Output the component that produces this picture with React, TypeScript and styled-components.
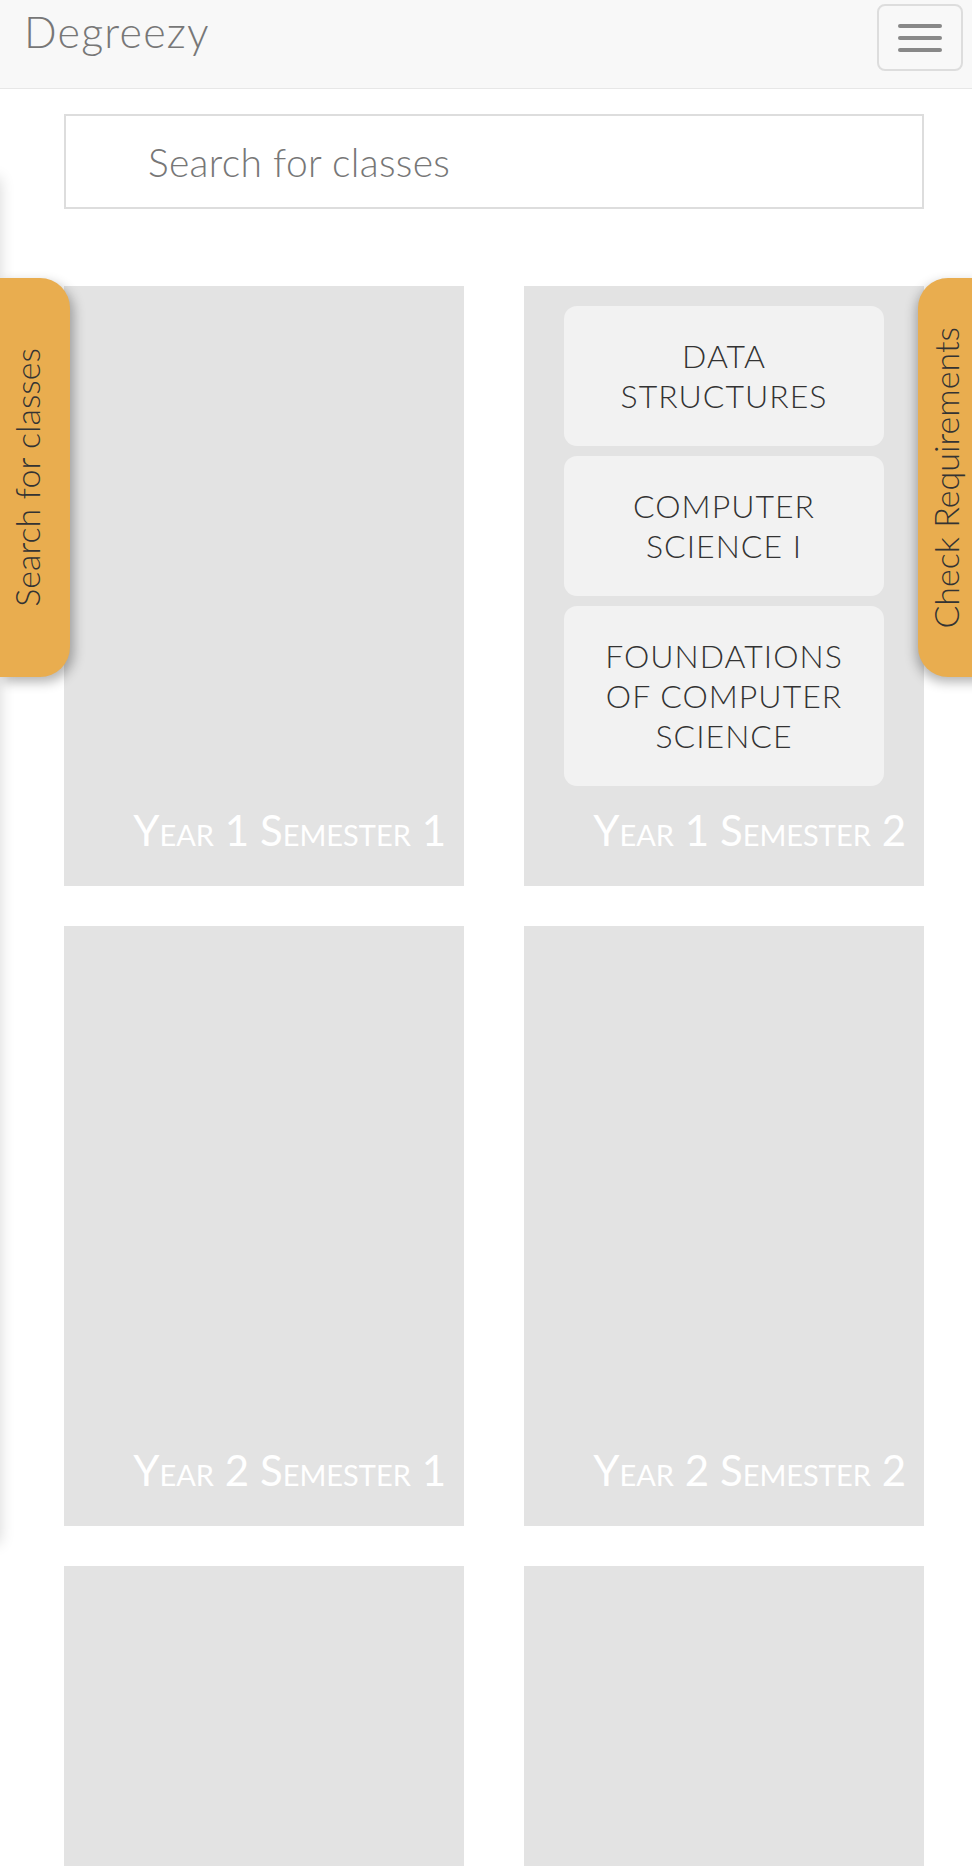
import React from 'react';
import styled, { createGlobalStyle } from 'styled-components';

const GlobalStyle = createGlobalStyle`
  body {
    margin: 0;
    background: #ffffff;
    font-family: Lato, "Open Sans", sans-serif;
    overflow-x: hidden;
  }
  * {
    box-sizing: border-box;
  }
`;

const Page = styled.div`
  position: relative;
  min-height: 1866px;
  overflow: hidden;
`;

const Navbar = styled.nav`
  height: 89px;
  background: #f8f8f8;
  border-bottom: 1px solid #e7e7e7;
  display: flex;
  justify-content: space-between;
  align-items: flex-start;
  padding: 0 9px 0 24px;
`;

const Brand = styled.a`
  margin-top: 11px;
  font-size: 43px;
  line-height: 42px;
  font-weight: 300;
  letter-spacing: 1.2px;
  color: #777;
  text-decoration: none;
`;

const Toggle = styled.button`
  margin-top: 4px;
  width: 86px;
  height: 67px;
  border: 2px solid #dddddd;
  border-radius: 8px;
  background: transparent;
  display: flex;
  flex-direction: column;
  align-items: center;
  justify-content: center;
  gap: 8px;
  padding: 0;
`;

const Bar = styled.span`
  display: block;
  width: 44px;
  height: 4px;
  border-radius: 2px;
  background: #888888;
`;

const Main = styled.main`
  padding: 25px 48px 0 64px;
`;

const SearchInput = styled.input`
  display: block;
  width: 100%;
  height: 95px;
  border: 2px solid #dddddd;
  padding: 0 0 0 82px;
  font-family: Lato, "Open Sans", sans-serif;
  font-size: 39px;
  font-weight: 300;
  letter-spacing: 0.3px;
  color: #555;
  outline: none;

  &::placeholder {
    color: #777;
  }
`;

const SemesterGrid = styled.div`
  margin-top: 77px;
  display: grid;
  grid-template-columns: 400px 400px;
  column-gap: 60px;
  row-gap: 40px;
`;

const SemesterCard = styled.section`
  height: 600px;
  background: #e3e3e3;
  display: flex;
  flex-direction: column;
  padding: 20px 40px 0;
`;

const CourseList = styled.div`
  display: flex;
  flex-direction: column;
  gap: 10px;
`;

const Course = styled.div`
  background: #f2f2f2;
  border-radius: 13px;
  padding: 30px 16px;
  text-align: center;
  text-transform: uppercase;
  font-size: 32px;
  line-height: 40px;
  font-weight: 300;
  letter-spacing: 1px;
  color: #333333;
`;

const SemesterTitle = styled.h3`
  margin: auto -22px 0 -20px;
  padding-bottom: 34px;
  text-align: right;
  white-space: nowrap;
  font-variant: small-caps;
  font-size: 42px;
  line-height: 44px;
  font-weight: 400;
  color: #ffffff;
`;

const DrawerShadow = styled.div`
  position: absolute;
  top: 178px;
  left: -400px;
  width: 400px;
  height: 1365px;
  background: #ffffff;
  box-shadow: 0 0 14px rgba(0, 0, 0, 0.16);
`;

const SideTab = styled.button<{ $side: 'left' | 'right' }>`
  position: absolute;
  top: 278px;
  ${({ $side }) => ($side === 'left' ? 'left: 0;' : 'left: 918px;')}
  width: 70px;
  height: 399px;
  border: none;
  background: #e9ad4f;
  border-radius: ${({ $side }) => ($side === 'left' ? '0 30px 30px 0' : '30px 0 0 30px')};
  box-shadow: ${({ $side }) => ($side === 'left' ? '4px 5px 12px' : '-2px 5px 12px')} rgba(0, 0, 0, 0.3);
  display: flex;
  align-items: center;
  justify-content: center;
  padding: ${({ $side }) => ($side === 'left' ? '0 16px 0 0' : '0 14px 0 0')};
  font-family: Lato, "Open Sans", sans-serif;
`;

const TabLabel = styled.span`
  writing-mode: vertical-rl;
  transform: rotate(180deg);
  white-space: nowrap;
  font-size: 34px;
  line-height: 34px;
  font-weight: 300;
  color: #333333;
`;

type Semester = { title: string; courses: string[] };

const semesters: Semester[] = [
  { title: 'Year 1 Semester 1', courses: [] },
  {
    title: 'Year 1 Semester 2',
    courses: ['Data Structures', 'Computer Science I', 'Foundations of Computer Science'],
  },
  { title: 'Year 2 Semester 1', courses: [] },
  { title: 'Year 2 Semester 2', courses: [] },
  { title: 'Year 3 Semester 1', courses: [] },
  { title: 'Year 3 Semester 2', courses: [] },
];

const App: React.FC = () => {
  return (
    <Page>
      <GlobalStyle />
      <Navbar>
        <Brand href="#">Degreezy</Brand>
        <Toggle aria-label="Toggle navigation">
          <Bar />
          <Bar />
          <Bar />
        </Toggle>
      </Navbar>

      <Main>
        <SearchInput placeholder="Search for classes" />
        <SemesterGrid>
          {semesters.map((semester) => (
            <SemesterCard key={semester.title}>
              <CourseList>
                {semester.courses.map((course) => (
                  <Course key={course}>{course}</Course>
                ))}
              </CourseList>
              <SemesterTitle>{semester.title}</SemesterTitle>
            </SemesterCard>
          ))}
        </SemesterGrid>
      </Main>

      <DrawerShadow />
      <SideTab $side="left">
        <TabLabel>Search for classes</TabLabel>
      </SideTab>
      <SideTab $side="right">
        <TabLabel>Check Requirements</TabLabel>
      </SideTab>
    </Page>
  );
};

export default App;
